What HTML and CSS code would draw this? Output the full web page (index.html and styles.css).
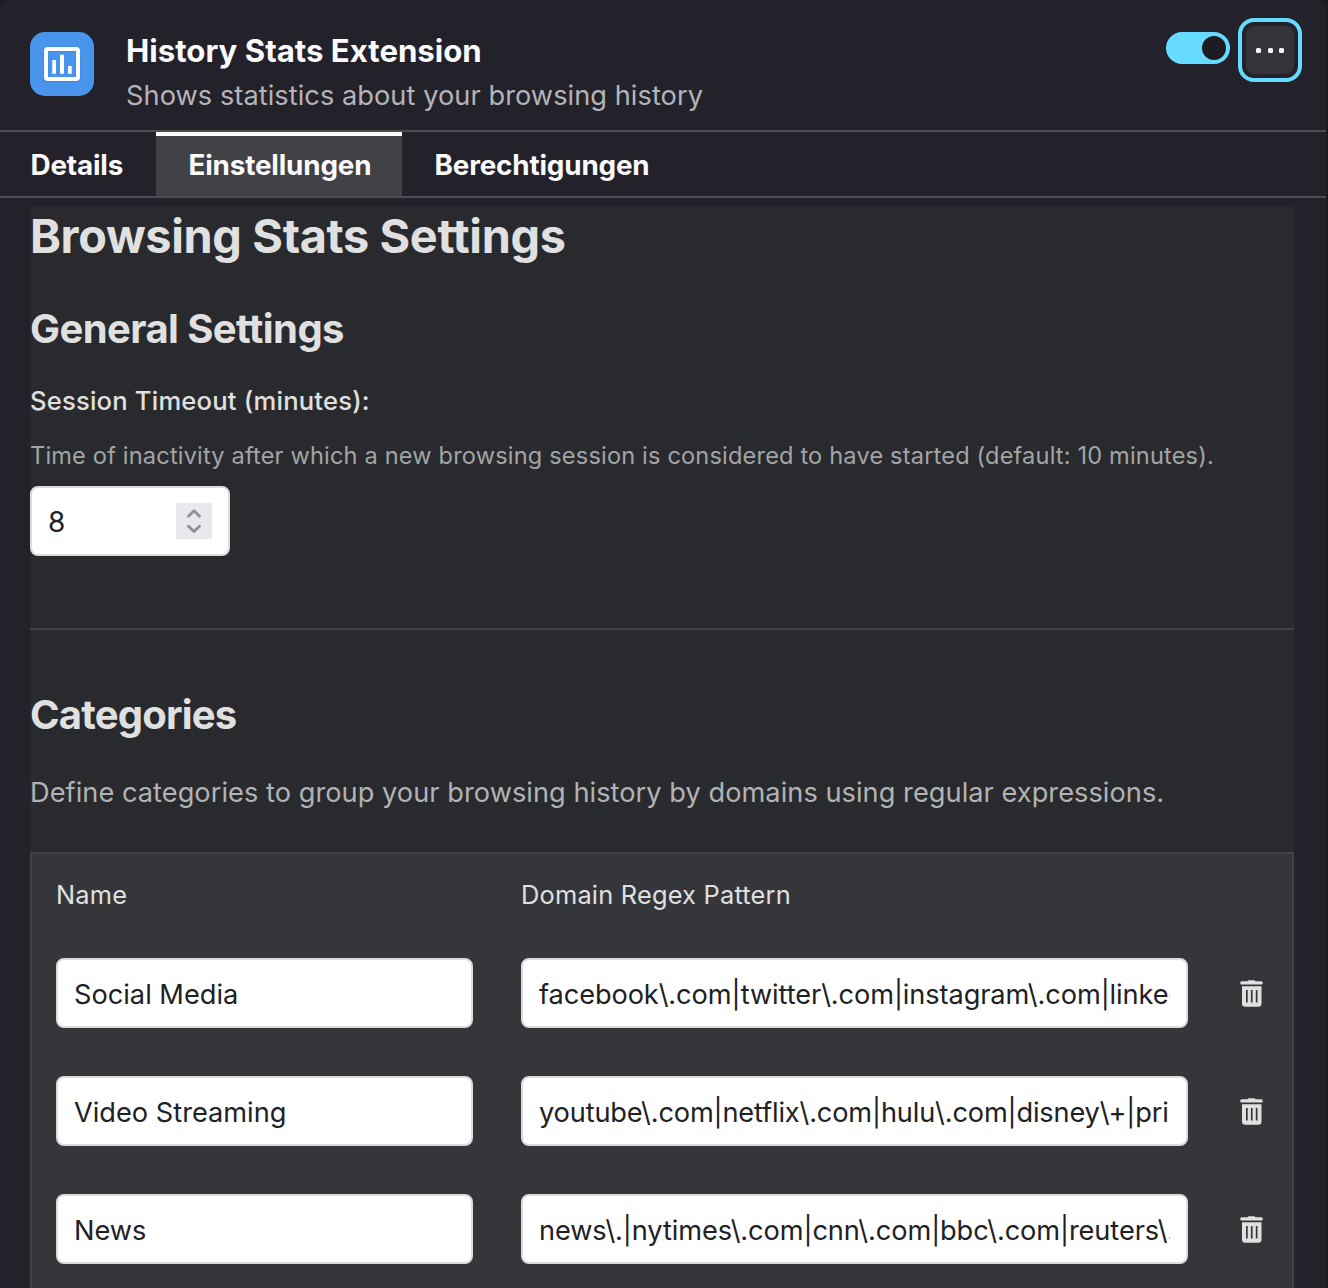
FILE: index.html
```html
<!DOCTYPE html>
<html lang="de">
<head>
<meta charset="utf-8">
<title>History Stats Extension</title>
<link rel="stylesheet" href="styles.css">
</head>
<body>
<svg class="defs" aria-hidden="true">
  <symbol id="trash" viewBox="0 0 23 27">
    <path fill="currentColor" d="M7.500 1.200Q8 .2 9 .2h5q1 0 1.500 1h5.700q1.600 0 1.600 1.700t-1.600 1.600H1.800Q.2 4.500.2 2.900t1.600-1.700z"/>
    <path fill="currentColor" fill-rule="evenodd" d="M2 6.300h19.500v17.200q0 3.300-3.300 3.300H5.300Q2 26.800 2 23.500zM6 10v12.500h1.700V10zm4.900 0v12.500h1.700V10zm4.900 0v12.500h1.700V10z"/>
  </symbol>
</svg>
<main class="card">
  <header class="header">
    <svg class="logo" width="64" height="64" viewBox="0 0 64 64">
      <rect width="64" height="64" rx="15" fill="#4895eb"/>
      <rect x="16" y="17.300" width="32" height="30.500" rx="2" fill="none" stroke="#2c6fbd" stroke-opacity=".35" stroke-width="5"/>
      <rect x="16" y="17" width="32" height="30" rx="1.800" fill="none" stroke="#fff" stroke-width="4"/>
      <path fill="#fff" d="M22.300 28h3.700v13.700h-3.700zM30 22.800h4v18.900h-4zM38 34h3.700v7.700H38z"/>
    </svg>
    <div class="heading">
      <h1 class="title">History Stats Extension</h1>
      <p class="subtitle">Shows statistics about your browsing history</p>
    </div>
    <div class="toggle"><span class="knob"></span></div>
    <button class="more" type="button" aria-label="Mehr"><span class="more-face"><i></i><i></i><i></i></span></button>
  </header>
  <nav class="tabs">
    <a class="tab tab-details">Details</a>
    <a class="tab tab-active">Einstellungen</a>
    <a class="tab">Berechtigungen</a>
  </nav>
  <section class="options">
    <h1 class="page-title">Browsing Stats Settings</h1>
    <h2 class="section-title">General Settings</h2>
    <label class="field-label" for="timeout">Session Timeout (minutes):</label>
    <p class="hint">Time of inactivity after which a new browsing session is considered to have started (default: 10 minutes).</p>
    <div class="number">
      <input class="number-input" id="timeout" value="8">
      <svg class="spinner" width="36" height="36" viewBox="0 0 36 36"><path d="M12.500 13.200l5.500-5.400 5.500 5.400M12.500 23.200l5.500 5.400 5.500-5.400" fill="none" stroke="#8f8f9d" stroke-width="2.800" stroke-linecap="round" stroke-linejoin="round"/></svg>
    </div>
    <hr class="divider">
    <h2 class="section-title">Categories</h2>
    <p class="lead">Define categories to group your browsing history by domains using regular expressions.</p>
    <div class="table">
      <span class="th">Name</span><span class="th th-pattern">Domain Regex Pattern</span>
      <input class="field" value="Social Media"><input class="field pattern" value="facebook\.com|twitter\.com|instagram\.com|linkedin\.com">
      <svg class="trash"><use href="#trash"/></svg>
      <input class="field" value="Video Streaming"><input class="field pattern pattern-tight" value="youtube\.com|netflix\.com|hulu\.com|disney\+|primevideo\.com">
      <svg class="trash"><use href="#trash"/></svg>
      <input class="field" value="News"><input class="field pattern" value="news\.|nytimes\.com|cnn\.com|bbc\.com|reuters\.com">
      <svg class="trash"><use href="#trash"/></svg>
    </div>
  </section>
</main>
</body>
</html>
```
FILE: styles.css
```css
* { box-sizing: border-box; }
html, body { height: 100%; }
body { margin: 0; overflow: hidden; background: #1c1b1f; font-family: Inter, "Liberation Sans", sans-serif; color: #fbfbfe; }
h1, h2, p { margin: 0; }
.defs { display: none; }
.card { width: 1326px; height: 1288px; overflow: hidden; background: #23222b; border-radius: 8px 8px 0 0; }
.header { display: flex; align-items: flex-start; height: 132px; padding: 18px 24px 0 30px; border-bottom: 2px solid #4f4e55; }
.logo { margin-top: 14px; flex: none; }
.heading { flex: 1; padding-left: 32px; white-space: nowrap; }
.title { margin-top: 11px; font-size: 31.2px; font-weight: 650; line-height: 44px; letter-spacing: -0.01px; }
.subtitle { font-size: 27.2px; line-height: 46px; letter-spacing: 0.055px; color: #b5b4b9; }
.toggle { display: flex; justify-content: flex-end; width: 64px; height: 32px; margin: 14px 8px 0 0; padding: 4px; border-radius: 16px; background: #67daff; }
.knob { width: 24px; height: 24px; border-radius: 50%; background: #1c1b22; }
.more { width: 64px; height: 64px; padding: 4px; border: 4px solid #67daff; border-radius: 16px; background: none; }
.more-face { display: flex; justify-content: center; align-items: center; gap: 6.5px; width: 48px; height: 48px; border-radius: 8px; background: #34333a; }
.more-face i { width: 5px; height: 5px; border-radius: 1.5px; background: #fbfbfe; }
.tabs { display: flex; height: 66px; border-bottom: 2px solid #4f4e55; font-size: 27.800px; font-weight: 650; line-height: 58px; letter-spacing: -0.15px; }
.tab { padding: 4px 32px 0 32.5px; }
.tab-details { width: 156px; padding-left: 30.500px; }
.tab-active { width: 246px; padding-top: 0; border-top: 4px solid #fff; background: #414245; }
.options { width: 1264px; margin: 8px 0 0 30px; height: 1100px; background: #292a2d; color: #e0e0e0; white-space: nowrap; }
.page-title { font-size: 46.800px; font-weight: 700; line-height: 60px; letter-spacing: -0.34px; }
.section-title { margin-top: 33px; font-size: 40px; font-weight: 700; line-height: 60px; letter-spacing: -0.58px; }
.field-label { display: block; margin-top: 22px; font-size: 25.600px; font-weight: 500; line-height: 40px; letter-spacing: 0.2px; }
.hint { margin-top: 15px; font-size: 23.600px; line-height: 40px; letter-spacing: 0.165px; color: #a3a4a6; }
.number { display: flex; align-items: center; justify-content: flex-end; width: 200px; height: 70px; margin-top: 10px; padding-right: 16px; border: 2px solid #dadce0; border-radius: 8px; background: #fff; }
.number-input { width: 100%; padding: 2px 0 0 16px; border: 0; background: none; font: 400 28px Inter, sans-serif; color: #202124; }
.spinner { flex: none; background: #e9e8ed; }
.divider { margin: 72px 0 55px; border: 0; height: 2px; background: #404145; }
.divider + .section-title { margin-top: 0; letter-spacing: -0.8px; }
.lead { margin-top: 28px; font-size: 27.200px; line-height: 40px; letter-spacing: 0.04px; color: #b2b3b5; }
.table { display: grid; grid-template-columns: 417px 667px 31px; grid-template-rows: 56px 70px 70px 70px; gap: 48px; height: 500px; margin-top: 39px; padding: 0 24px; border: 2px solid #3f4145; background: #35363a; }
.th { padding-top: 21px; font-size: 25.400px; line-height: 40px; letter-spacing: 0.2px; }
.th-pattern { grid-column: 2 / 4; }
.field { width: 100%; height: 70px; padding: 2px 16px 0; border: 2px solid #dadce0; border-radius: 8px; background: #fff; font: 400 27.200px Inter, sans-serif; color: #202124; }
.pattern { letter-spacing: -0.1px; }
.pattern-tight { letter-spacing: -0.16px; }
.trash { align-self: center; justify-self: center; width: 23px; height: 27px; color: #e0e0e0; }
```
